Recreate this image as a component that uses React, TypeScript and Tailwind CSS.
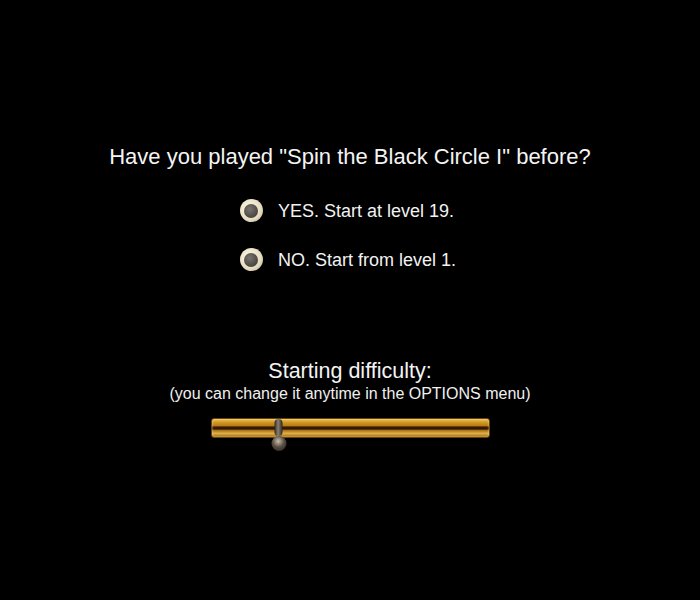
import React, { useState } from 'react';

const Radio: React.FC<{ label: string; checked: boolean; onClick: () => void }> = ({ label, checked, onClick }) => (
  <button onClick={onClick} className="flex h-[23px] items-center gap-[15px] text-left">
    <span className="flex h-[23px] w-[23px] items-center justify-center rounded-full bg-[radial-gradient(circle_at_40%_40%,#fffbe8,#e6dcc0_60%,#a89f88)] shadow-[0_0_2px_#000]">
      <span
        className={
          'h-[14px] w-[14px] rounded-full bg-[radial-gradient(circle_at_40%_35%,#7a7570,#4a4642_70%,#2f2c29)] ' +
          (checked ? 'ring-2 ring-[#1a1a1a]' : '')
        }
      />
    </span>
    <span className="text-[18px] leading-[22px] text-[#f2f2f2]">{label}</span>
  </button>
);

export default function App() {
  const [played, setPlayed] = useState<'yes' | 'no' | null>(null);
  const [difficulty] = useState(0.245);

  return (
    <div
      className="flex h-[600px] w-[700px] flex-col items-center bg-black text-white"
      style={{ fontFamily: '"Liberation Sans", Arial, sans-serif' }}
    >
      <h1 className="mt-[144px] text-[22px] leading-[26px] text-[#f4f4f4]">
        Have you played "Spin the Black Circle I" before?
      </h1>

      <div className="ml-[-4px] mt-[29px] flex flex-col gap-[26px]">
        <Radio label="YES. Start at level 19." checked={played === 'yes'} onClick={() => setPlayed('yes')} />
        <Radio label="NO. Start from level 1." checked={played === 'no'} onClick={() => setPlayed('no')} />
      </div>

      <div className="mt-[88px] text-[21.5px] leading-[24px] text-[#f4f4f4]">Starting difficulty:</div>
      <div className="mt-[2px] text-[16px] leading-[18px] text-[#f0f0f0]">
        (you can change it anytime in the OPTIONS menu)
      </div>

      {/* gold slider rail */}
      <div className="relative mt-[15px] h-[20px] w-[279px]">
        <div className="h-full w-full rounded-[3px] border border-[#6b4408] bg-[linear-gradient(to_bottom,#e8c060_0%,#d0961f_20%,#b87a14_38%,#3a1e05_44%,#2a1404_56%,#a86e12_62%,#e0b04a_80%,#9a6410_100%)] shadow-[inset_0_0_2px_#ffe9a8]" />
        <div
          className="absolute top-[1px] flex -translate-x-1/2 flex-col items-center"
          style={{ left: `${difficulty * 100}%` }}
        >
          <div className="h-[17px] w-[8px] rounded-full bg-[linear-gradient(to_right,#2a2520,#8a8070_45%,#2a2520)]" />
          <div className="h-[15px] w-[15px] rounded-full bg-[radial-gradient(circle_at_45%_35%,#c8bfae,#5a4f44_45%,#1e1914)]" />
        </div>
      </div>
    </div>
  );
}
